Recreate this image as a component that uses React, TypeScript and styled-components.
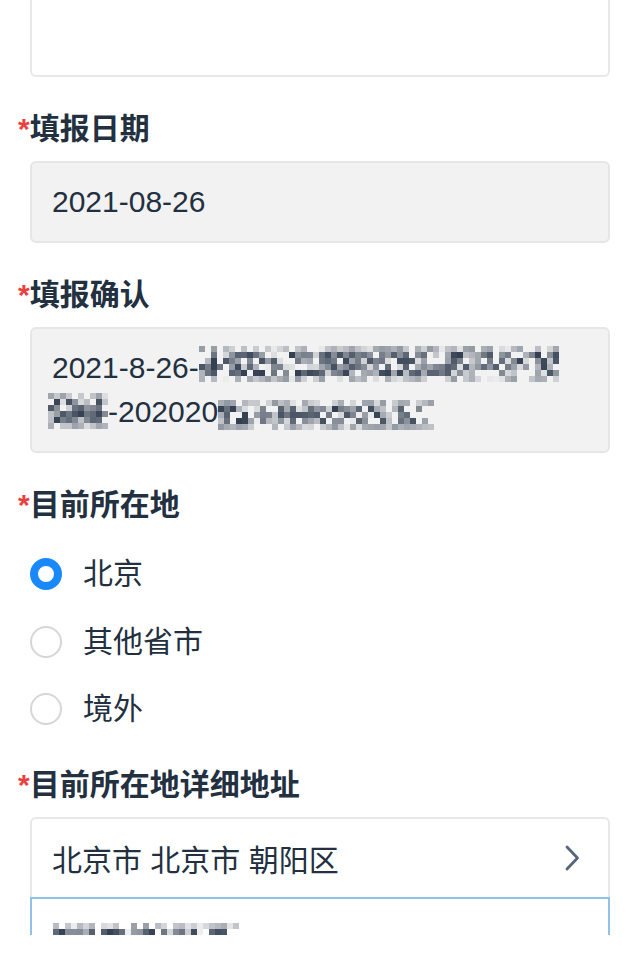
import React from 'react';
import styled, { createGlobalStyle } from 'styled-components';

const GlobalStyle = createGlobalStyle`
  html, body {
    margin: 0;
    padding: 0;
    background: #ffffff;
  }
  body {
    font-family: "Liberation Sans", "Noto Sans CJK SC", sans-serif;
    color: #22303f;
  }
`;

const Page = styled.div`
  height: 935px;
  overflow: hidden;
  padding: 0 30px;
  box-sizing: border-box;
`;

const TopArea = styled.div`
  margin-top: -63px;
  height: 140px;
  box-sizing: border-box;
  border: 2px solid #e8e8e8;
  border-radius: 6px;
  background: #fff;
`;

const Field = styled.div`
  margin-top: 30px;
`;

const Label = styled.div`
  margin-left: -12px;
  height: 44px;
  line-height: 44px;
  margin-bottom: 10px;
  font-size: 30px;
  font-weight: 700;
  color: #22303f;
  white-space: nowrap;
`;

const Star = styled.span`
  color: #ec4141;
  font-weight: 700;
`;

const ReadonlyBox = styled.div`
  box-sizing: border-box;
  border: 2px solid #e6e6e6;
  border-radius: 6px;
  background: #f2f2f2;
  padding: 17px 20px;
  font-size: 30px;
  line-height: 44px;
  color: #22303f;
`;

const Line = styled.div`
  white-space: nowrap;
  height: 44px;
`;

const Grid = styled.span<{ $cols: number; $top: number; $left: number }>`
  display: inline-grid;
  grid-template-columns: repeat(${p => p.$cols}, 6px);
  grid-auto-rows: 6px;
  vertical-align: top;
  margin-top: ${p => p.$top}px;
  margin-left: ${p => p.$left}px;
`;

const RadioGroup = styled.div`
  padding-top: 13px;
  display: flex;
  flex-direction: column;
  gap: 19.5px;
`;

const RadioRow = styled.div`
  height: 48px;
  display: flex;
  align-items: center;
  gap: 21px;
  font-size: 30px;
  color: #22303f;
`;

const RadioText = styled.span`
  padding-bottom: 6px;
`;

const RadioDot = styled.span<{ $checked?: boolean }>`
  width: 32px;
  height: 32px;
  box-sizing: border-box;
  border-radius: 50%;
  background: #fff;
  border: ${p => (p.$checked ? '8px solid #1989fa' : '2px solid #d6d6d6')};
  flex-shrink: 0;
`;

const PickerRow = styled.div`
  height: 80px;
  box-sizing: border-box;
  border: 2px solid #e8e8e8;
  border-bottom: none;
  border-radius: 6px 6px 0 0;
  display: flex;
  align-items: center;
  justify-content: space-between;
  padding: 0 28px 0 20px;
  font-size: 30px;
  color: #22303f;
  white-space: nowrap;
`;

const DetailArea = styled.div`
  height: 130px;
  box-sizing: border-box;
  border: 2px solid #8fc1ea;
  padding: 24px 21px;
  line-height: 18px;
`;

const rng = (seed: number) => {
  let s = seed;
  return () => {
    s = (s * 9301 + 49297) % 233280;
    return s / 233280;
  };
};

const mix = (a: number[], b: number[], t: number) =>
  `rgb(${a.map((v, i) => Math.round(v + (b[i] - v) * t)).join(',')})`;

const Mosaic: React.FC<{
  cols: number;
  rows: number;
  seed: number;
  top?: number;
  left?: number;
  bg?: number[];
}> = ({ cols, rows, seed, top = 0, left = 0, bg = [242, 242, 242] }) => {
  const rand = rng(seed);
  const dark = [50, 62, 80];
  const cells: string[] = [];
  for (let r = 0; r < rows; r++) {
    const edge = r === 0 || r === rows - 1;
    for (let c = 0; c < cols; c++) {
      const v = rand();
      let t = v < 0.2 ? 0 : Math.pow(rand(), 0.65);
      if (edge) t *= 0.5;
      cells.push(mix(bg, dark, t));
    }
  }
  return (
    <Grid $cols={cols} $top={top} $left={left}>
      {cells.map((c, i) => (
        <span key={i} style={{ background: c }} />
      ))}
    </Grid>
  );
};

const Chevron = () => (
  <svg width="16" height="28" viewBox="0 0 16 28" fill="none">
    <path d="M3 3 L13.5 14 L3 25" stroke="#56667b" strokeWidth="2.8" strokeLinecap="round" strokeLinejoin="round" />
  </svg>
);

const places = ['北京', '其他省市', '境外'];

export default function App() {
  return (
    <>
      <GlobalStyle />
      <Page>
        <TopArea />

        <Field>
          <Label>
            <Star>*</Star>填报日期
          </Label>
          <ReadonlyBox>
            <Line>2021-08-26</Line>
          </ReadonlyBox>
        </Field>

        <Field>
          <Label>
            <Star>*</Star>填报确认
          </Label>
          <ReadonlyBox>
            <Line>
              2021-8-26-
              <Mosaic cols={60} rows={6} seed={17} />
            </Line>
            <Line>
              <Mosaic cols={10} rows={6} seed={91} top={3} left={-4} />
              -202020
              <Mosaic cols={36} rows={5} seed={43} top={10} />
            </Line>
          </ReadonlyBox>
        </Field>

        <Field>
          <Label>
            <Star>*</Star>目前所在地
          </Label>
          <RadioGroup>
            {places.map((p, i) => (
              <RadioRow key={p}>
                <RadioDot $checked={i === 0} />
                <RadioText>{p}</RadioText>
              </RadioRow>
            ))}
          </RadioGroup>
        </Field>

        <Field>
          <Label>
            <Star>*</Star>目前所在地详细地址
          </Label>
          <PickerRow>
            <span>北京市 北京市 朝阳区</span>
            <Chevron />
          </PickerRow>
          <DetailArea>
            <Mosaic cols={33} rows={3} seed={7} bg={[255, 255, 255]} />
          </DetailArea>
        </Field>
      </Page>
    </>
  );
}
